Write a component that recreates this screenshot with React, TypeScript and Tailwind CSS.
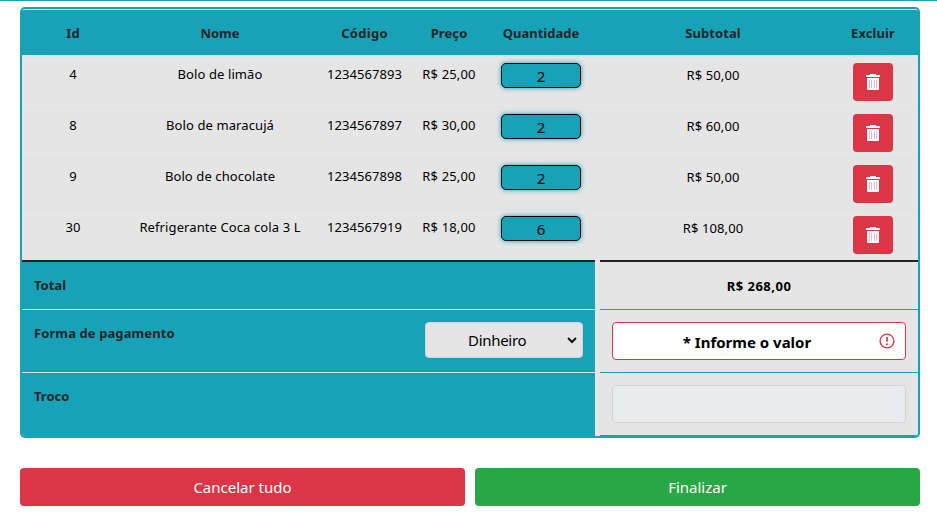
import React from 'react';

interface Item {
  id: string;
  name: string;
  code: string;
  price: string;
  quantity: string;
  subtotal: string;
}

const items: Item[] = [
  { id: '4', name: 'Bolo de limão', code: '1234567893', price: 'R$ 25,00', quantity: '2', subtotal: 'R$ 50,00' },
  { id: '8', name: 'Bolo de maracujá', code: '1234567897', price: 'R$ 30,00', quantity: '2', subtotal: 'R$ 60,00' },
  { id: '9', name: 'Bolo de chocolate', code: '1234567898', price: 'R$ 25,00', quantity: '2', subtotal: 'R$ 50,00' },
  { id: '30', name: 'Refrigerante Coca cola 3 L', code: '1234567919', price: 'R$ 18,00', quantity: '6', subtotal: 'R$ 108,00' },
];

const columns = 'grid grid-cols-[102px_192px_97px_72px_112px_232px_88px] text-center';

function TrashIcon() {
  return (
    <svg width="14" height="16" viewBox="0 0 14 16" fill="none">
      <path fill="#fff" d="M0 1h4V0h6v1h4v2H0z" />
      <path fill="#fff" fillRule="evenodd" d="M1 4h12v11q0 1-1 1H2q-1 0-1-1z" />
      <path fill="#f2b3cf" d="M3 6h1v8H3zM5 6h1v8H5zM8 6h1v8H8zM10 6h1v8h-1z" />
    </svg>
  );
}

function AlertIcon() {
  return (
    <svg width="16" height="16" viewBox="0 0 16 16" fill="none">
      <circle cx="8" cy="8" r="6.9" stroke="#dc3545" strokeWidth="1.4" />
      <path d="M8 4v4.8" stroke="#dc3545" strokeWidth="1.7" />
      <circle cx="8" cy="11.2" r="1" fill="#dc3545" />
    </svg>
  );
}

function ItemRow({ item }: { item: Item }) {
  return (
    <div className={`${columns} h-[51px] border-t border-[#dee2e6] text-[13px] leading-5 text-black`}>
      <div className="pt-[7px]">{item.id}</div>
      <div className="pt-[7px] tracking-[0.1px]">{item.name}</div>
      <div className="pt-[7px] tracking-[0.05px]">{item.code}</div>
      <div className="pt-[7px] tracking-[0.15px]">{item.price}</div>
      <div className="flex justify-center pt-1.5">
        <div className="h-[25px] w-20 rounded-[5px] border border-black bg-[#17a2b8] pt-px text-[15px] leading-[23px] shadow-[0_0_5px_#17a2b8]">
          {item.quantity}
        </div>
      </div>
      <div className="pt-2 tracking-[0.1px]">{item.subtotal}</div>
      <div className="flex justify-center pt-1.5">
        <button className="flex h-[38px] w-10 items-center justify-center rounded bg-[#dc3545]">
          <TrashIcon />
        </button>
      </div>
    </div>
  );
}

export default function App() {
  return (
    <div className="h-[517px] border-t border-[#17a2b8] bg-white px-5 pt-1.5 font-['Noto_Sans','Open_Sans',sans-serif]">
      <div className="h-[431px] w-[900px] overflow-hidden rounded-[5px] border-2 border-[#17a2b8] bg-[#e5e5e5]">
        <div className={`${columns} h-[46px] border-t border-[#dee2e6] bg-[#17a2b8] pt-[13px] text-[13px] leading-5 font-bold text-[#212529]`}>
          <div>Id</div>
          <div>Nome</div>
          <div className="tracking-[0.3px]">Código</div>
          <div className="tracking-[0.1px]">Preço</div>
          <div>Quantidade</div>
          <div className="tracking-[0.1px]">Subtotal</div>
          <div className="tracking-[0.1px]">Excluir</div>
        </div>
        <div className="border-t border-[#dee2e6]">
          {items.map((item) => (
            <ItemRow key={item.id} item={item} />
          ))}
        </div>
        <div className="flex h-[176px] gap-[5px] text-[13px] leading-5 font-bold">
          <div className="w-[573px] border-t-2 border-[#212529] bg-[#17a2b8] text-[#212529]">
            <div className="h-[47px] px-3 pt-[13px]">Total</div>
            <div className="flex h-[63px] justify-between border-t border-[#dee2e6] px-3">
              <span className="pt-[13px] tracking-[0.1px]">Forma de pagamento</span>
              <div className="mt-3 flex h-9 w-[158px] items-center rounded border border-[#ced4da] bg-[#e5e5e5] pr-[5px] pl-[42px] text-[15px] font-normal text-black">
                <span className="flex-1 tracking-[-0.3px]">Dinheiro</span>
                <svg width="10" height="7" viewBox="0 0 10 7" fill="none">
                  <path d="M1 1l4 4 4-4" stroke="#111" strokeWidth="2" />
                </svg>
              </div>
            </div>
            <div className="border-t border-[#dee2e6] px-3 pt-[13px]">Troco</div>
          </div>
          <div className="w-[318px] border-t-2 border-[#212529] text-black">
            <div className="h-[47px] pt-3.5 text-center tracking-[0.5px]">R$ 268,00</div>
            <div className="h-[63px] border-t border-[#17a2b8] px-3 pt-3">
              <div className="flex h-[38px] items-center rounded border border-[#dc3545] bg-white pr-2.5 text-[15px]">
                <span className="flex-1 pt-0.5 pl-[2px] text-center">* Informe o valor</span>
                <AlertIcon />
              </div>
            </div>
            <div className="h-[63px] border-t border-[#17a2b8] px-3 pt-3">
              <div className="h-[38px] rounded border border-[#ced4da] bg-[#e9ecef]" />
            </div>
            <div className="h-px bg-[#17a2b8]" />
          </div>
        </div>
      </div>
      <div className="mt-[30px] flex gap-2.5 text-[15px] text-white">
        <button className="h-[38px] w-[445px] shrink-0 rounded bg-[#dc3545]">Cancelar tudo</button>
        <button className="h-[38px] w-[445px] shrink-0 rounded bg-[#28a745]">Finalizar</button>
      </div>
    </div>
  );
}
